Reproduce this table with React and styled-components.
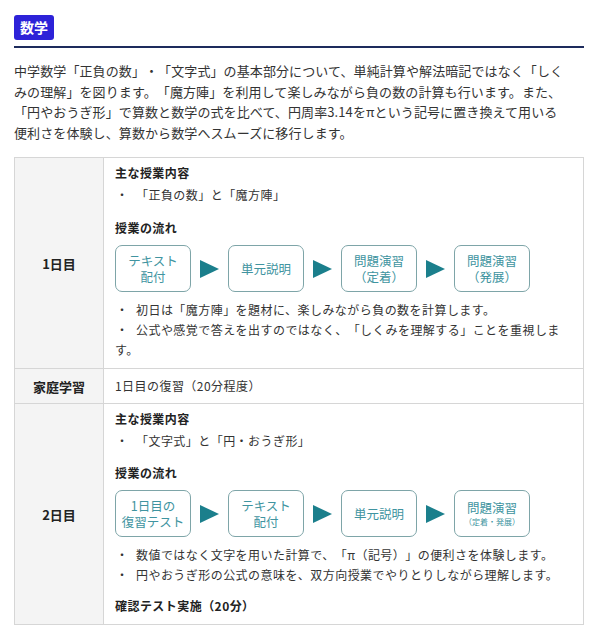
import styled, { createGlobalStyle } from "styled-components";

const GlobalStyle = createGlobalStyle`
  body{
    margin:0;
    background:#fff;
    font-family:"Noto Sans CJK JP","Noto Sans",sans-serif;
    color:#333;
    text-spacing-trim:space-all;
  }
`;

const Page = styled.div`
  width:570px;
  padding:15px 0 0 14px;
`;

const Header = styled.div`
  padding-bottom:6px;
  border-bottom:2px solid #1d2b5c;
`;

const Badge = styled.span`
  display:inline-block;
  height:25px;
  line-height:25px;
  padding:0 6px;
  background:#2d22d8;
  color:#fff;
  font-size:14px;
  font-weight:bold;
  border-radius:3px;
  vertical-align:top;
`;

const Lead = styled.p`
  margin:13px 0 0;
  font-size:13px;
  letter-spacing:0.1px;
  line-height:20.6px;
  white-space:nowrap;
`;

const Table = styled.div`
  margin-top:14px;
  border:1px solid #d6d6d6;
  border-top:none;
`;

const Row = styled.div`
  display:grid;
  grid-template-columns:89px 1fr;
  border-top:1px solid #d6d6d6;
`;

const Label = styled.div`
  display:flex;
  align-items:center;
  justify-content:center;
  background:#f4f4f4;
  border-right:1px solid #d6d6d6;
  font-size:13px;
  font-weight:bold;
  color:#222;
`;

const Cell = styled.div`
  padding:${props=>props.compact?'7px 11px':'5px 11px 8px'};
  font-size:12px;
  letter-spacing:0.45px;
  line-height:20px;
`;

const Heading = styled.div`
  font-weight:bold;
  color:#222;
  margin-top:${props=>props.gap||0}px;
`;

const Bullets = styled.div`
  margin-top:${props=>props.gap||0}px;
`;

const Bullet = styled.div`
  &::before{
    content:"・";
    display:inline-block;
    width:21px;
    padding-left:1px;
    box-sizing:border-box;
  }
`;

const Flow = styled.div`
  display:flex;
  align-items:center;
  margin-top:7px;
`;

const Step = styled.div`
  width:76px;
  height:47px;
  box-sizing:border-box;
  border:1px solid #7ea5a8;
  border-radius:7px;
  display:flex;
  flex-direction:column;
  align-items:center;
  justify-content:center;
  color:#4094a0;
  font-size:12.5px;
  letter-spacing:0;
  line-height:16px;
  text-align:center;
`;

const Small = styled.span`
  font-size:8px;
  line-height:12px;
`;

const ArrowBox = styled.div`
  width:37px;
  display:flex;
  justify-content:center;
`;

const Arrow = ()=>(
  <ArrowBox>
    <svg width="19" height="18" viewBox="0 0 19 18">
      <polygon points="0,0 19,9 0,18" fill="#1b7f8c"/>
    </svg>
  </ArrowBox>
);

const FlowSteps = ({steps})=>(
  <Flow>
    {steps.map((s,i)=>(
      <div key={i} style={{display:'contents'}}>
        {i>0 && <Arrow/>}
        <Step>{s}</Step>
      </div>
    ))}
  </Flow>
);

const App = ()=>{
  return(
    <Page>
      <GlobalStyle/>
      <Header><Badge>数学</Badge></Header>
      <Lead>
        中学数学「正負の数」・「文字式」の基本部分について、単純計算や解法暗記ではなく「しく<br/>
        みの理解」を図ります。「魔方陣」を利用して楽しみながら負の数の計算も行います。また、<br/>
        「円やおうぎ形」で算数と数学の式を比べて、円周率3.14をπという記号に置き換えて用いる<br/>
        便利さを体験し、算数から数学へスムーズに移行します。
      </Lead>
      <Table>
        <Row>
          <Label>1日目</Label>
          <Cell>
            <Heading>主な授業内容</Heading>
            <Bullets gap={2}>
              <Bullet>「正負の数」と「魔方陣」</Bullet>
            </Bullets>
            <Heading gap={13}>授業の流れ</Heading>
            <FlowSteps steps={[
              <>テキスト<br/>配付</>,
              <>単元説明</>,
              <>問題演習<br/>（定着）</>,
              <>問題演習<br/>（発展）</>,
            ]}/>
            <Bullets gap={8}>
              <Bullet>初日は「魔方陣」を題材に、楽しみながら負の数を計算します。</Bullet>
              <Bullet>公式や感覚で答えを出すのではなく、「しくみを理解する」ことを重視しま<br/>す。</Bullet>
            </Bullets>
          </Cell>
        </Row>
        <Row>
          <Label>家庭学習</Label>
          <Cell compact>1日目の復習（20分程度）</Cell>
        </Row>
        <Row>
          <Label>2日目</Label>
          <Cell>
            <Heading>主な授業内容</Heading>
            <Bullets gap={2}>
              <Bullet>「文字式」と「円・おうぎ形」</Bullet>
            </Bullets>
            <Heading gap={12}>授業の流れ</Heading>
            <FlowSteps steps={[
              <>1日目の<br/>復習テスト</>,
              <>テキスト<br/>配付</>,
              <>単元説明</>,
              <>問題演習<br/><Small>（定着・発展）</Small></>,
            ]}/>
            <Bullets gap={8}>
              <Bullet>数値ではなく文字を用いた計算で、「π（記号）」の便利さを体験します。</Bullet>
              <Bullet>円やおうぎ形の公式の意味を、双方向授業でやりとりしながら理解します。</Bullet>
            </Bullets>
            <Heading gap={11}>確認テスト実施（20分）</Heading>
          </Cell>
        </Row>
      </Table>
    </Page>
  )
}

export default App;
